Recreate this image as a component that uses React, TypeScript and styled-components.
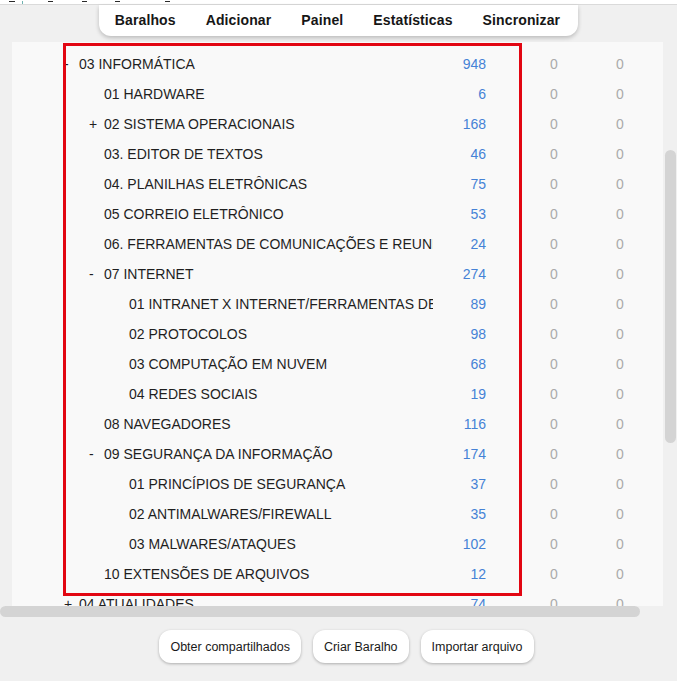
import React from "react"
import styled, { createGlobalStyle } from "styled-components"

const GlobalStyle = createGlobalStyle`
  * { box-sizing: border-box; }
  html, body {
    margin: 0;
    padding: 0;
    background: #f0f0f0;
    font-family: "Liberation Sans", Arial, sans-serif;
    overflow: hidden;
  }
`

const SApp = styled.div`
  width: 677px;
  height: 681px;
  display: flex;
  flex-direction: column;
  background: #f0f0f0;
`

const SMenuStrip = styled.div`
  height: 5px;
  background: #ffffff;
  border-bottom: 1px solid #dadada;
  display: flex;
  align-items: flex-start;
  padding-top: 1px;
`

const SMenuMark = styled.span<{ $gap: number; $w: number; $tint?: boolean }>`
  margin-left: ${({ $gap }) => $gap}px;
  width: ${({ $w }) => $w}px;
  height: ${({ $tint }) => ($tint ? 3 : 1)}px;
  background: ${({ $tint }) => ($tint ? "#6fb2b0" : "#2a2a2a")};
`

const SToolbarRow = styled.div`
  display: flex;
  justify-content: center;
  height: 31px;
`

const SToolbar = styled.nav`
  display: flex;
  align-items: center;
  padding: 0 3px 0 1px;
  background: #ffffff;
  border-radius: 0 0 12px 12px;
  box-shadow: 0 2px 4px rgba(0, 0, 0, 0.22);
`

const SToolItem = styled.span`
  padding: 0 15px;
  font-size: 14px;
  font-weight: 700;
  letter-spacing: 0.12px;
  color: #161616;
  line-height: 31px;
`

const SMain = styled.div`
  display: grid;
  grid-template-columns: 663px 14px;
  grid-template-rows: 570px 12px;
`

const SViewport = styled.div`
  overflow: hidden;
  padding: 6px 0 0 12px;
`

const SDeckPanel = styled.div`
  position: relative;
  width: 680px;
  min-height: 600px;
  padding-top: 7px;
  background: #f9f9f9;
`

const SRow = styled.div`
  display: grid;
  grid-template-columns: 52px 369px 53px 34px 68px 64px;
  height: 30px;
  align-items: center;
  font-size: 14px;
`

const SNameCell = styled.div<{ $level: number }>`
  grid-column: 2;
  display: flex;
  padding-left: ${({ $level }) => $level * 25}px;
  overflow: hidden;
  white-space: nowrap;
  color: #1f1f1f;
`

const SMarker = styled.span`
  flex: 0 0 15px;
  color: #1f1f1f;
`

const SDue = styled.span`
  grid-column: 3;
  text-align: right;
  color: #4582d6;
`

const SZero = styled.span<{ $col: number }>`
  grid-column: ${({ $col }) => $col};
  text-align: center;
  color: #ababab;
`

const SHighlight = styled.div`
  position: absolute;
  left: 51px;
  top: 1px;
  width: 459px;
  height: 553px;
  border: 3px solid #e20612;
  pointer-events: none;
`

const SVTrack = styled.div`
  background: #f0f0f0;
  padding: 114px 1px 0 2px;
`

const SVThumb = styled.div`
  height: 293px;
  border-radius: 6px;
  background: #d4d4d4;
`

const SHTrack = styled.div`
  background: #f0f0f0;
`

const SHThumb = styled.div`
  width: 640px;
  height: 11px;
  border-radius: 6px;
  background: #d4d4d4;
`

const SBottomBar = styled.div`
  flex: 1;
  display: flex;
  justify-content: center;
  align-items: flex-start;
  gap: 12px;
  padding: 12px 0 0 16px;
`

const SButton = styled.button`
  height: 33px;
  padding: 0 11px;
  border: none;
  border-radius: 12px;
  background: #ffffff;
  box-shadow: 0 1px 3px rgba(0, 0, 0, 0.28);
  font-family: "Liberation Sans", Arial, sans-serif;
  font-size: 12.5px;
  color: #1a1a1a;
`

type Deck = { name: string; level: number; marker?: string; due: number }

const decks: Deck[] = [
  { name: "03 INFORMÁTICA", level: 0, marker: "-", due: 948 },
  { name: "01 HARDWARE", level: 1, due: 6 },
  { name: "02 SISTEMA OPERACIONAIS", level: 1, marker: "+", due: 168 },
  { name: "03. EDITOR DE TEXTOS", level: 1, due: 46 },
  { name: "04. PLANILHAS ELETRÔNICAS", level: 1, due: 75 },
  { name: "05 CORREIO ELETRÔNICO", level: 1, due: 53 },
  { name: "06. FERRAMENTAS DE COMUNICAÇÕES E REUNIÕES", level: 1, due: 24 },
  { name: "07 INTERNET", level: 1, marker: "-", due: 274 },
  { name: "01 INTRANET X INTERNET/FERRAMENTAS DE BUSCA", level: 2, due: 89 },
  { name: "02 PROTOCOLOS", level: 2, due: 98 },
  { name: "03 COMPUTAÇÃO EM NUVEM", level: 2, due: 68 },
  { name: "04 REDES SOCIAIS", level: 2, due: 19 },
  { name: "08 NAVEGADORES", level: 1, due: 116 },
  { name: "09 SEGURANÇA DA INFORMAÇÃO", level: 1, marker: "-", due: 174 },
  { name: "01 PRINCÍPIOS DE SEGURANÇA", level: 2, due: 37 },
  { name: "02 ANTIMALWARES/FIREWALL", level: 2, due: 35 },
  { name: "03 MALWARES/ATAQUES", level: 2, due: 102 },
  { name: "10 EXTENSÕES DE ARQUIVOS", level: 1, due: 12 },
  { name: "04 ATUALIDADES", level: 0, marker: "+", due: 74 },
]

const menuMarks = [
  { gap: 9, w: 6 },
  { gap: 7, w: 1, tint: true },
  { gap: 25, w: 5 },
  { gap: 29, w: 5 },
  { gap: 28, w: 5 },
  { gap: 45, w: 5 },
]

const App = () => {
  return (
    <SApp>
      <GlobalStyle />
      <SMenuStrip>
        {menuMarks.map((m, i) => (
          <SMenuMark key={i} $gap={m.gap} $w={m.w} $tint={m.tint} />
        ))}
      </SMenuStrip>
      <SToolbarRow>
        <SToolbar>
          <SToolItem>Baralhos</SToolItem>
          <SToolItem>Adicionar</SToolItem>
          <SToolItem>Painel</SToolItem>
          <SToolItem>Estatísticas</SToolItem>
          <SToolItem>Sincronizar</SToolItem>
        </SToolbar>
      </SToolbarRow>
      <SMain>
        <SViewport>
          <SDeckPanel>
            {decks.map((d) => (
              <SRow key={d.name}>
                <SNameCell $level={d.level}>
                  <SMarker>{d.marker ?? ""}</SMarker>
                  <span>{d.name}</span>
                </SNameCell>
                <SDue>{d.due}</SDue>
                <SZero $col={5}>0</SZero>
                <SZero $col={6}>0</SZero>
              </SRow>
            ))}
            <SHighlight />
          </SDeckPanel>
        </SViewport>
        <SVTrack>
          <SVThumb />
        </SVTrack>
        <SHTrack>
          <SHThumb />
        </SHTrack>
        <SHTrack />
      </SMain>
      <SBottomBar>
        <SButton>Obter compartilhados</SButton>
        <SButton>Criar Baralho</SButton>
        <SButton>Importar arquivo</SButton>
      </SBottomBar>
    </SApp>
  )
}

export default App
